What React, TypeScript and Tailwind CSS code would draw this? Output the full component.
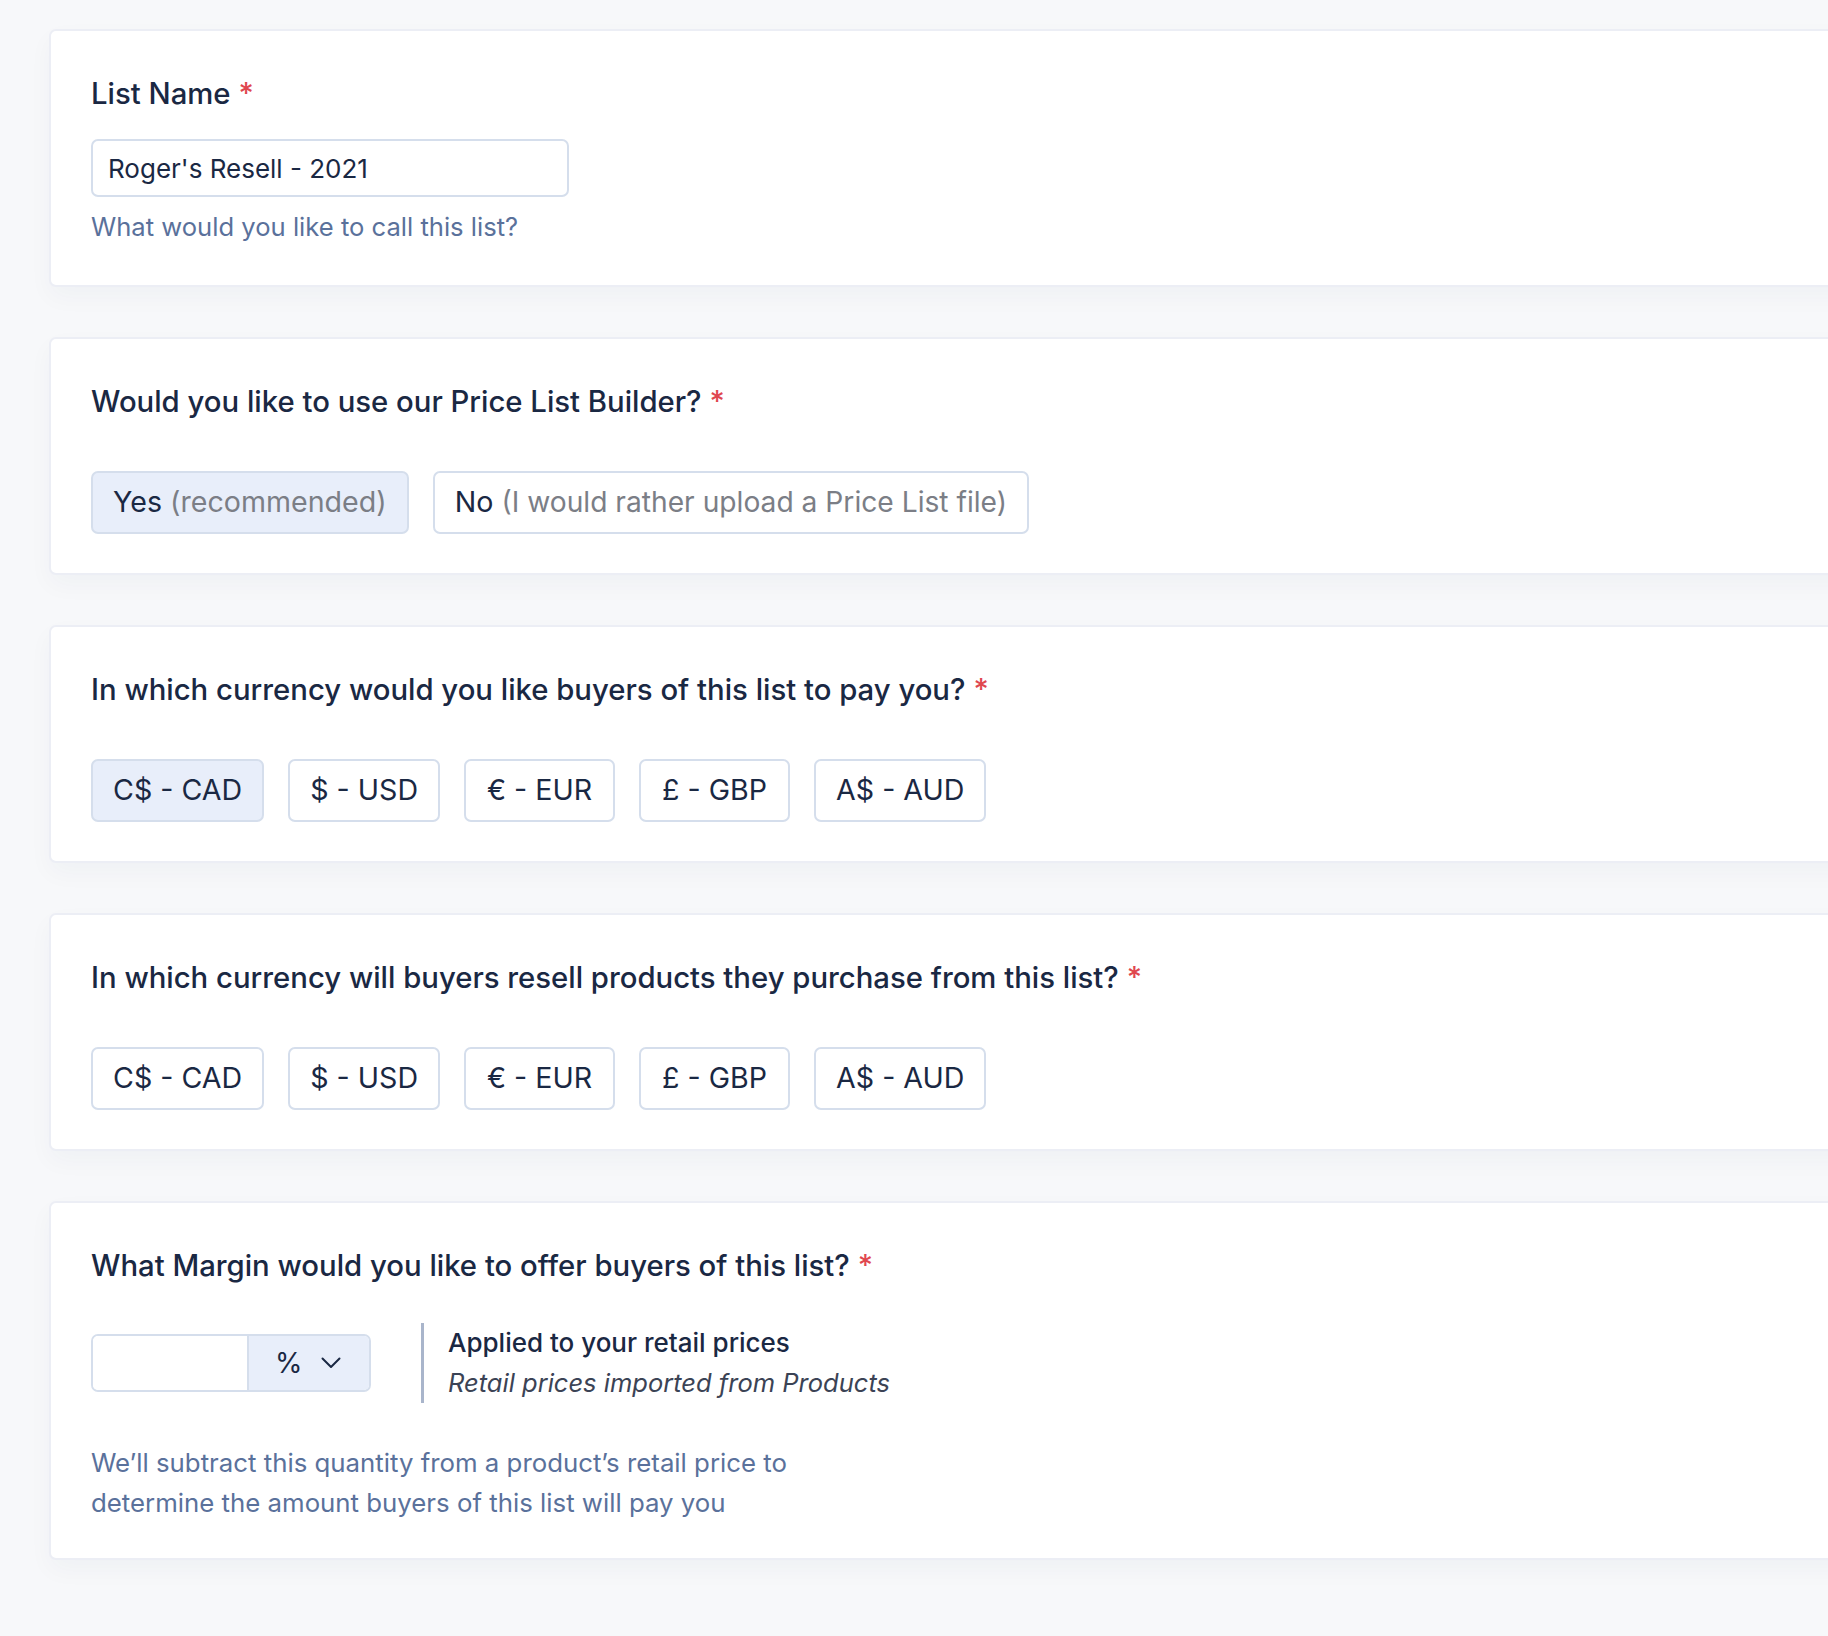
import React, { useState } from "react";

const currencies = ["C$ - CAD", "$ - USD", "€ - EUR", "£ - GBP", "A$ - AUD"];

function Required() {
  return <span className="ml-[8px] text-[#e0474f]">*</span>;
}

function Card({ children, className = "" }: { children: React.ReactNode; className?: string }) {
  return (
    <div
      className={`mr-[-40px] rounded-[7px] border-2 border-[#eceef5] bg-white pl-[40px] pt-[46px] shadow-[0_10px_24px_rgba(30,45,90,0.035)] ${className}`}
    >
      {children}
    </div>
  );
}

function Heading({ children }: { children: React.ReactNode }) {
  return (
    <h2 className="text-[29.3px] leading-[34px] font-medium text-[#1a2843]">
      {children}
      <Required />
    </h2>
  );
}

function Choice({
  selected,
  onClick,
  children,
}: {
  selected: boolean;
  onClick: () => void;
  children: React.ReactNode;
}) {
  return (
    <button
      type="button"
      onClick={onClick}
      className={`h-[63px] min-w-[151px] rounded-[7px] border-2 border-[#d5deec] px-[20px] text-center text-[28.6px] leading-none text-[#1a2843] ${
        selected ? "bg-[#e8eefa]" : "bg-white"
      }`}
    >
      {children}
    </button>
  );
}

function CurrencyRow({ initial }: { initial: string | null }) {
  const [value, setValue] = useState<string | null>(initial);
  return (
    <div className="mt-[52px] flex gap-[24px]">
      {currencies.map((c) => (
        <Choice key={c} selected={value === c} onClick={() => setValue(c)}>
          {c}
        </Choice>
      ))}
    </div>
  );
}

export default function App() {
  const [builder, setBuilder] = useState<"yes" | "no">("yes");
  const [name, setName] = useState("Roger's Resell - 2021");

  return (
    <div
      className="min-h-screen overflow-hidden bg-[#f7f8fa] pb-[76px] pl-[49px] pt-[29px] text-[#1a2843]"
      style={{ fontFamily: "Inter, 'Noto Sans', sans-serif" }}
    >
      <div className="flex flex-col gap-[50px]">
        {/* List name */}
        <Card className="pb-[38px]">
          <label className="block text-[29.3px] leading-[34px] font-medium text-[#1a2843]">
            List Name
            <Required />
          </label>
          <input
            value={name}
            onChange={(e) => setName(e.target.value)}
            className="mt-[28px] block h-[58px] w-[478px] rounded-[7px] border-2 border-[#d5deec] bg-white px-[15px] text-[26px] text-[#1a2843] outline-none"
          />
          <p className="mt-[10px] text-[25.6px] leading-[40px] text-[#5a719b]">
            What would you like to call this list?
          </p>
        </Card>

        {/* Price list builder */}
        <Card className="pb-[39px]">
          <Heading>Would you like to use our Price List Builder?</Heading>
          <div className="mt-[52px] flex gap-[24px]">
            <Choice selected={builder === "yes"} onClick={() => setBuilder("yes")}>
              Yes <span className="text-[#7b7e86]">(recommended)</span>
            </Choice>
            <Choice selected={builder === "no"} onClick={() => setBuilder("no")}>
              No <span className="text-[28.2px] text-[#7b7e86]">(I would rather upload a Price List file)</span>
            </Choice>
          </div>
        </Card>

        {/* Pay currency */}
        <Card className="pb-[39px]">
          <Heading>In which currency would you like buyers of this list to pay you?</Heading>
          <CurrencyRow initial="C$ - CAD" />
        </Card>

        {/* Resell currency */}
        <Card className="pb-[39px]">
          <Heading>In which currency will buyers resell products they purchase from this list?</Heading>
          <CurrencyRow initial={null} />
        </Card>

        {/* Margin */}
        <Card className="pb-[35px]">
          <Heading>What Margin would you like to offer buyers of this list?</Heading>
          <div className="mt-[40px] flex items-center">
            <div className="flex h-[58px] w-[280px] overflow-hidden rounded-[7px] border-2 border-[#d5deec]">
              <input className="w-[156px] border-r-2 border-[#d5deec] bg-white px-[14px] text-[26px] outline-none" />
              <div className="flex flex-1 items-center gap-[18px] bg-[#e8eefa] pl-[26px] text-[28px] text-[#1a2843]">
                <span>%</span>
                <svg width="20" height="12" viewBox="0 0 20 12" fill="none">
                  <path d="M1.5 1.5 L10 10 L18.5 1.5" stroke="#1a2843" strokeWidth="2" strokeLinecap="round" strokeLinejoin="round" />
                </svg>
              </div>
            </div>
            <div className="ml-[50px] border-l-[3px] border-[#a9b5cb] pl-[24px]">
              <p className="text-[26px] leading-[40px] font-medium text-[#1a2843]">
                Applied to your retail prices
              </p>
              <p className="text-[25.5px] leading-[40px] italic text-[#3b4355]">
                Retail prices imported from Products
              </p>
            </div>
          </div>
          <p className="mt-[40px] w-[760px] text-[25.8px] leading-[40px] text-[#5a719b]">
            We’ll subtract this quantity from a product’s retail price to determine the amount buyers of
            this list will pay you
          </p>
        </Card>
      </div>
    </div>
  );
}
